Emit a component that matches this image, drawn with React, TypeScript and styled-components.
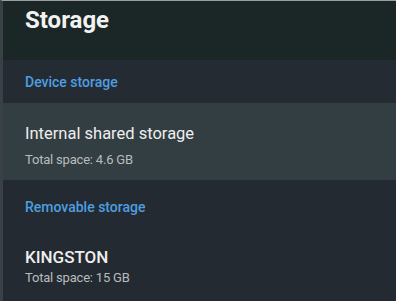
import React from "react";
import styled, { createGlobalStyle } from "styled-components";

const Global = createGlobalStyle`
  html, body {
    margin: 0;
    padding: 0;
    background: #232a31;
  }
  body {
    font-family: Roboto, "Noto Sans", sans-serif;
    -webkit-font-smoothing: antialiased;
  }
`;

const Screen = styled.div`
  width: 396px;
  height: 301px;
  box-sizing: border-box;
  border-left: 3px solid #3a4146;
  border-top: 1px solid #9aa0a2;
  background: #232a31;
  display: flex;
  flex-direction: column;
  overflow: hidden;
`;

const Header = styled.div`
  height: 59px;
  box-sizing: border-box;
  background: #1b2727;
  padding: 3px 0 0 22px;
`;

const Title = styled.h1`
  margin: 0;
  font-size: 24px;
  font-weight: 700;
  color: #f2f2f2;
  line-height: 32px;
`;

const SectionLabel = styled.div<{ $height: number; $shaded?: boolean }>`
  height: ${({ $height }) => $height}px;
  box-sizing: border-box;
  display: flex;
  align-items: center;
  padding-left: 22px;
  background: ${({ $shaded }) => ($shaded ? "#252b33" : "#232a31")};
  color: #4d9fe0;
  font-size: 14px;
  font-weight: 500;
`;

const Row = styled.div<{ $active?: boolean; $height: number; $gap: number; $top: number }>`
  height: ${({ $height }) => $height}px;
  box-sizing: border-box;
  display: flex;
  flex-direction: column;
  justify-content: center;
  gap: ${({ $gap }) => $gap}px;
  padding: ${({ $top }) => $top}px 0 0 22px;
  background: ${({ $active }) => ($active ? "#333e42" : "#232a31")};
`;

const RowTitle = styled.div<{ $strong?: boolean }>`
  font-size: ${({ $strong }) => ($strong ? 17 : 16.5)}px;
  font-weight: ${({ $strong }) => ($strong ? 500 : 400)};
  color: #eeeeee;
  line-height: 20px;
`;

const RowSub = styled.div`
  font-size: 13px;
  color: #b9bcbd;
  line-height: 16px;
  letter-spacing: -0.2px;
`;

export default function App() {
  return (
    <>
      <Global />
      <Screen>
        <Header>
          <Title>Storage</Title>
        </Header>
        <SectionLabel $height={43} $shaded>
          Device storage
        </SectionLabel>
        <Row $active $height={77} $gap={8} $top={8}>
          <RowTitle>Internal shared storage</RowTitle>
          <RowSub>Total space: 4.6 GB</RowSub>
        </Row>
        <SectionLabel $height={53}>Removable storage</SectionLabel>
        <Row $height={66} $gap={3} $top={0}>
          <RowTitle $strong>KINGSTON</RowTitle>
          <RowSub>Total space: 15 GB</RowSub>
        </Row>
      </Screen>
    </>
  );
}
